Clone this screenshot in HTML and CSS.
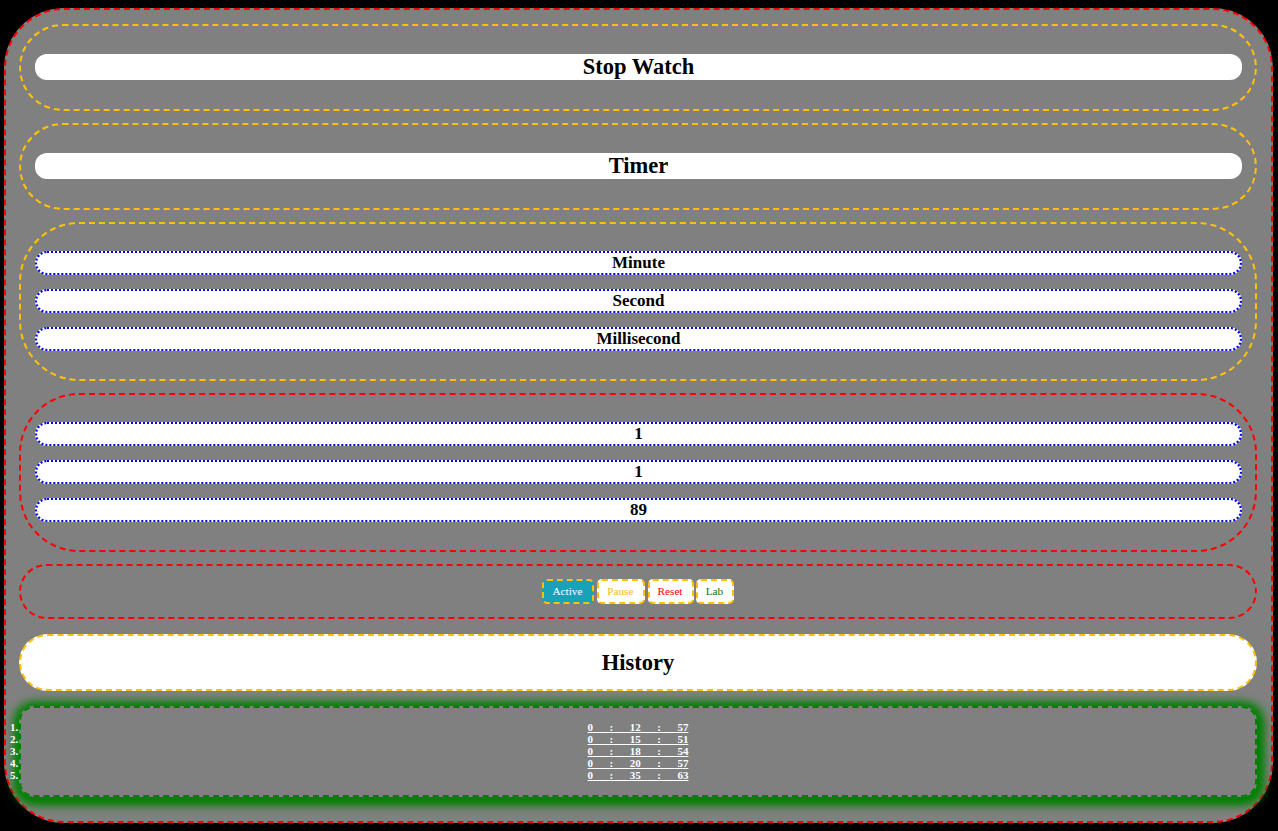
FILE: index.html
```html
<!DOCTYPE html>
<html lang="en">
<head>
<meta charset="utf-8">
<title>Stop Watch</title>
<link rel="stylesheet" href="styles.css">
</head>
<body>
<main class="app">
  <header class="card title"><h1 class="heading">Stop Watch</h1></header>
  <section class="card title"><h2 class="heading">Timer</h2></section>
  <section class="card stack">
    <h3 class="pill">Minute</h3>
    <h3 class="pill">Second</h3>
    <h3 class="pill">Millisecond</h3>
  </section>
  <section class="card stack red">
    <h3 class="pill">1</h3>
    <h3 class="pill">1</h3>
    <h3 class="pill">89</h3>
  </section>
  <section class="card controls red">
    <button class="btn active">Active</button>
    <button class="btn pause">Pause</button>
    <button class="btn reset">Reset</button>
    <button class="btn lab">Lab</button>
  </section>
  <h2 class="card history">History</h2>
  <ol class="log">
    <li><u>0&nbsp;&nbsp;&nbsp;&nbsp;&nbsp;&nbsp;:&nbsp;&nbsp;&nbsp;&nbsp;&nbsp;&nbsp;12&nbsp;&nbsp;&nbsp;&nbsp;&nbsp;&nbsp;:&nbsp;&nbsp;&nbsp;&nbsp;&nbsp;&nbsp;57</u></li>
    <li><u>0&nbsp;&nbsp;&nbsp;&nbsp;&nbsp;&nbsp;:&nbsp;&nbsp;&nbsp;&nbsp;&nbsp;&nbsp;15&nbsp;&nbsp;&nbsp;&nbsp;&nbsp;&nbsp;:&nbsp;&nbsp;&nbsp;&nbsp;&nbsp;&nbsp;51</u></li>
    <li><u>0&nbsp;&nbsp;&nbsp;&nbsp;&nbsp;&nbsp;:&nbsp;&nbsp;&nbsp;&nbsp;&nbsp;&nbsp;18&nbsp;&nbsp;&nbsp;&nbsp;&nbsp;&nbsp;:&nbsp;&nbsp;&nbsp;&nbsp;&nbsp;&nbsp;54</u></li>
    <li><u>0&nbsp;&nbsp;&nbsp;&nbsp;&nbsp;&nbsp;:&nbsp;&nbsp;&nbsp;&nbsp;&nbsp;&nbsp;20&nbsp;&nbsp;&nbsp;&nbsp;&nbsp;&nbsp;:&nbsp;&nbsp;&nbsp;&nbsp;&nbsp;&nbsp;57</u></li>
    <li><u>0&nbsp;&nbsp;&nbsp;&nbsp;&nbsp;&nbsp;:&nbsp;&nbsp;&nbsp;&nbsp;&nbsp;&nbsp;35&nbsp;&nbsp;&nbsp;&nbsp;&nbsp;&nbsp;:&nbsp;&nbsp;&nbsp;&nbsp;&nbsp;&nbsp;63</u></li>
  </ol>
</main>
</body>
</html>
```
FILE: styles.css
```css
* { box-sizing: border-box; }
body {
  margin: 0;
  padding: 8px 5px 8px 4px;
  background: #000;
  font-family: "Liberation Serif", "Times New Roman", serif;
}
h1, h2, h3 { margin: 0; }
.app {
  height: 815px;
  padding: 14px 14px 0 13px;
  background: gray;
  border: 2px dashed red;
  border-radius: 60px;
}
.card {
  margin: 0 0 12px;
  border: 2px dashed #ffc107;
  border-radius: 60px;
}
.red { border-color: red; }
.title { height: 87px; padding: 28px 13px 0 14px; }
.heading {
  height: 26px;
  background: #fff;
  border-radius: 12px;
  font-size: 22.5px;
  line-height: 26px;
  text-align: center;
}
.stack {
  display: flex;
  flex-direction: column;
  gap: 14px;
  height: 159px;
  padding: 27px 13px 0 14px;
}
.pill {
  height: 24px;
  background: #fff;
  border: 2px dotted blue;
  border-radius: 12px;
  font-size: 17px;
  line-height: 20px;
  text-align: center;
}
.controls {
  display: flex;
  justify-content: center;
  gap: 2.5px;
  height: 55px;
  padding-top: 13px;
  margin-bottom: 15px;
}
.btn {
  height: 25px;
  padding: 0 1px 0 0;
  background: #fff;
  border: 2px dashed #ffc107;
  border-radius: 5px;
  font-family: inherit;
  font-size: 11.25px;
  line-height: 19px;
}
.active { width: 52px; background: #17a2b8; color: #fff; }
.pause { width: 48.5px; color: #ffb52e; }
.reset { width: 46px; color: red; }
.lab { width: 38px; color: green; }
.history {
  height: 57px;
  margin-bottom: 15px;
  background: #fff;
  font-size: 22.5px;
  line-height: 53px;
  text-align: center;
}
.log {
  height: 91px;
  margin: 0;
  padding: 13px 0 0;
  border: 2px dashed green;
  border-radius: 15px;
  box-shadow: 1px 2px 8px 7px green;
  color: #fff;
  font-size: 11px;
  font-weight: bold;
  line-height: 12px;
  text-align: center;
}
```
